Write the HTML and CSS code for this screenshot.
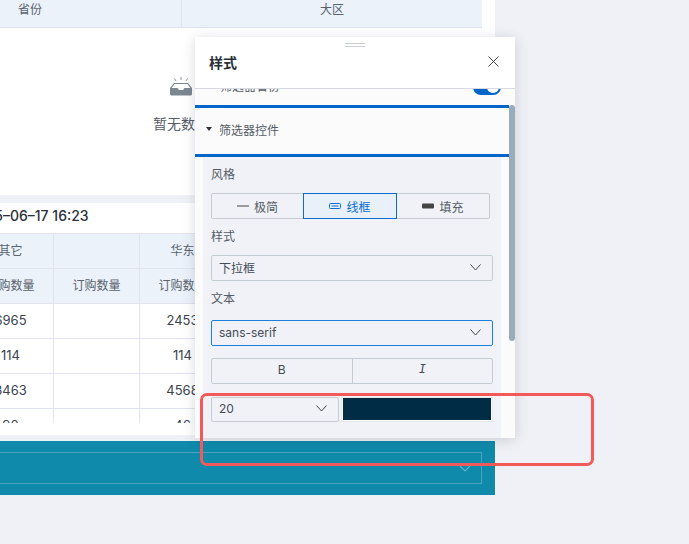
FILE: index.html
```html
<!DOCTYPE html>
<html lang="zh-CN">
<head>
  <meta charset="UTF-8">
  <meta name="viewport" content="width=device-width, initial-scale=1.0">
  <title>样式</title>
  <link rel="stylesheet" href="styles.css">
</head>
<body>
  <div class="main">
    <div class="card card-top">
      <div class="top-head">
        <div class="top-cell">省份</div>
        <div class="top-cell">大区</div>
      </div>
      <div class="empty">
        <svg class="empty-icon" width="24" height="20" viewBox="0 0 24 20">
          <path d="M12 1v3M5.5 2.5l1.5 2.5M18.500 2.500l-1.500 2.500" stroke="#8a929c" stroke-width="1" fill="none"/>
          <path d="M5 7h14l4 5v6a1.500 1.500 0 0 1-1.500 1.500h-19A1.500 1.500 0 0 1 1 18v-6z" fill="#7d8791"/>
          <path d="M5.500 8h13l2.800 4h-5.800l-1.500 2h-4l-1.500-2H2.700z" fill="#fff"/>
        </svg>
        <p>暂无数据</p>
      </div>
    </div>

    <div class="card card-table">
      <div class="update-time">2025–06–17 16:23</div>
      <div class="table-wrap">
        <table class="data-table">
          <tr class="head"><th>其它</th><th></th><th>华东</th><th></th></tr>
          <tr class="head"><th>订购数量</th><th>订购数量</th><th>订购数量</th><th>订购数量</th></tr>
          <tr><td>6965</td><td></td><td>2453</td><td></td></tr>
          <tr><td>114</td><td></td><td>114</td><td></td></tr>
          <tr><td>3463</td><td></td><td>4568</td><td></td></tr>
          <tr><td>90</td><td></td><td>46</td><td></td></tr>
        </table>
      </div>
    </div>

    <div class="teal-bar">
      <div class="teal-select">
        <svg width="12" height="7" viewBox="0 0 12 7"><path d="M1 1l5 5 5-5" stroke="#5fb0c8" stroke-width="1.200" fill="none"/></svg>
      </div>
    </div>
  </div>

  <!-- 样式面板 -->
  <div class="panel">
    <div class="drag-handle"></div>
    <div class="panel-head">
      <span class="panel-title">样式</span>
      <svg class="close" width="11" height="11" viewBox="0 0 11 11"><path d="M.5.5l10 10M10.500.5l-10 10" stroke="#444" stroke-width="1" fill="none"/></svg>
    </div>
    <div class="panel-scroll">
      <div class="clipped-row">
        <span>筛选器省份</span>
        <span class="toggle"></span>
      </div>
      <div class="section-head">
        <span class="caret"></span>筛选器控件
      </div>
      <div class="section-body">
        <div class="label">风格</div>
        <div class="segmented">
          <div class="seg">
            <svg width="12" height="8" viewBox="0 0 12 8"><rect y="3.500" width="12" height="1" fill="#444"/></svg>极简
          </div>
          <div class="seg seg-active">
            <svg width="12" height="8" viewBox="0 0 12 8"><rect x=".5" y="1.500" width="11" height="5" rx="1" fill="none" stroke="#0a6cd0"/><rect x="2.500" y="3.500" width="7" height="1" fill="#0a6cd0"/></svg>线框
          </div>
          <div class="seg">
            <svg width="12" height="8" viewBox="0 0 12 8"><rect y="1.500" width="12" height="5" rx="1" fill="#444"/></svg>填充
          </div>
        </div>
        <div class="label label-mid">样式</div>
        <div class="select">下拉框
          <svg width="11" height="7" viewBox="0 0 11 7"><path d="M.5.5l5 5.500 5-5.500" stroke="#444" stroke-width="1" fill="none"/></svg>
        </div>
        <div class="label label-mid">文本</div>
        <div class="select select-focus">sans-serif
          <svg width="11" height="7" viewBox="0 0 11 7"><path d="M.5.5l5 5.500 5-5.500" stroke="#444" stroke-width="1" fill="none"/></svg>
        </div>
        <div class="font-style">
          <div class="font-btn">B</div>
          <div class="font-btn font-italic">I</div>
        </div>
        <div class="font-row">
          <div class="select select-size">20
            <svg width="11" height="7" viewBox="0 0 11 7"><path d="M.5.5l5 5.500 5-5.500" stroke="#444" stroke-width="1" fill="none"/></svg>
          </div>
          <div class="swatch"><span></span></div>
        </div>
      </div>
      <div class="scroll-thumb"></div>
    </div>
  </div>

  <div class="annotation"></div>
</body>
</html>
```

FILE: styles.css
```css
* {
  box-sizing: border-box;
}
html, body {
  height: 100%;
}
body {
  margin: 0;
  background: #f0f1f6;
  font-family: Inter, "Noto Sans CJK SC", sans-serif;
  font-size: 12px;
  color: #3c4450;
  overflow: hidden;
  position: relative;
}
.main {
  width: 616px;
  margin-left: -121px;
  display: flex;
  flex-direction: column;
}
.card {
  background: #fff;
}
.card-top {
  height: 195px;
  margin-bottom: 8px;
}
.top-head {
  display: flex;
  width: 603px;
  height: 28px;
  background: #ebf2fa;
  border-bottom: 1px solid #dfe4ec;
}
.top-cell {
  width: 302px;
  text-align: center;
  line-height: 20px;
  color: #5a626d;
}
.top-cell + .top-cell {
  width: 301px;
  border-left: 1px solid #dfe4ec;
}
.empty {
  width: 604px;
  padding-top: 48px;
  text-align: center;
}
.empty-icon {
  display: block;
  margin: 0 auto;
}
.empty p {
  margin: 18px 0 0;
  font-size: 14px;
  line-height: 20px;
  color: #555c66;
}
.card-table {
  height: 232px;
  padding-left: 88px;
  margin-bottom: 6px;
}
.update-time {
  height: 30px;
  line-height: 26px;
  padding-left: 1px;
  font-size: 14px;
  font-weight: 500;
  color: #2c323a;
}
.table-wrap {
  height: 190px;
  overflow: hidden;
}
.data-table {
  border-collapse: collapse;
  table-layout: fixed;
  width: 344px;
}
.data-table th,
.data-table td {
  width: 86px;
  height: 35px;
  text-align: center;
  font-weight: 400;
  border: 1px solid #e1e3ee;
}
.data-table th {
  padding: 0 0 3px;
  background: #ebf2fa;
  color: #5a626d;
}
.data-table td {
  padding: 0 0 2px;
  font-size: 13px;
  color: #3c4450;
}
.teal-bar {
  height: 54px;
  padding: 11px 13px 11px 0;
  background: #0f8aab;
}
.teal-select {
  height: 32px;
  border: 1px solid #48a3bd;
  display: flex;
  align-items: center;
  justify-content: flex-end;
  padding-right: 10px;
}

/* 样式面板 */
.panel {
  position: absolute;
  left: 195px;
  top: 37px;
  width: 320px;
  height: 401px;
  background: #fbfbfb;
  box-shadow: 0 2px 12px rgba(40, 50, 70, 0.18);
  display: flex;
  flex-direction: column;
}
.drag-handle {
  position: absolute;
  left: 150px;
  top: 6px;
  width: 20px;
  height: 4px;
  border-top: 1px solid #c8ccd4;
  border-bottom: 1px solid #c8ccd4;
}
.panel-head {
  height: 52px;
  flex: none;
  background: #fff;
  border-bottom: 1px solid #d8d9e2;
  display: flex;
  align-items: center;
  justify-content: space-between;
  padding: 0 16px 2px 14px;
}
.panel-title {
  font-size: 14px;
  font-weight: 600;
  color: #2a2f36;
}
.panel-scroll {
  flex: 1;
  position: relative;
  overflow: hidden;
}
.clipped-row {
  height: 16px;
  margin-top: -10px;
  display: flex;
  justify-content: space-between;
  align-items: center;
  padding: 0 14px 0 25px;
  line-height: 16px;
  color: #555c66;
}
.toggle {
  width: 28px;
  height: 16px;
  border-radius: 8px;
  background: #0064c8;
  position: relative;
}
.toggle::after {
  content: "";
  position: absolute;
  right: 2px;
  top: 2px;
  width: 12px;
  height: 12px;
  border-radius: 50%;
  background: #fff;
}
.section-head {
  height: 52px;
  margin-top: 10px;
  width: 314px;
  border-top: 3px solid #0064c8;
  border-bottom: 3px solid #0064c8;
  display: flex;
  align-items: center;
  padding: 0 0 4px 11px;
  color: #555c66;
}
.caret {
  width: 0;
  height: 0;
  margin-right: 7px;
  border-left: 3px solid transparent;
  border-right: 3px solid transparent;
  border-top: 4px solid #333;
}
.section-body {
  margin: 0 14px 0 8px;
  height: 300px;
  background: #f0f2f7;
  padding: 9px 0 0 8px;
}
.label {
  height: 18px;
  line-height: 18px;
  margin-bottom: 9px;
  color: #555c66;
}
.label-mid {
  margin-top: 9px;
}
.segmented {
  display: flex;
  width: 279px;
  height: 26px;
  border: 1px solid #c6ccd4;
  border-radius: 2px;
}
.seg {
  flex: 1;
  display: flex;
  align-items: center;
  justify-content: center;
  gap: 5px;
  color: #555c66;
}
.seg:first-child {
  flex: none;
  width: 91px;
}
.seg-active {
  margin: -1px 0;
  flex: none;
  width: 94px;
  height: 26px;
  border: 1px solid #0a6cd0;
  background: #e8f1fa;
  color: #0a6cd0;
}
.select {
  width: 282px;
  height: 26px;
  border: 1px solid #c6ccd4;
  border-radius: 2px;
  display: flex;
  align-items: center;
  justify-content: space-between;
  padding: 0 11px 2px 7px;
  color: #444b55;
}
.select-focus {
  border-color: #1a7fe0;
  margin-top: 12px;
}
.font-style {
  display: flex;
  width: 282px;
  height: 26px;
  margin-top: 12px;
  border: 1px solid #c6ccd4;
  border-radius: 2px;
}
.font-btn {
  flex: 1;
  text-align: center;
  line-height: 22px;
  color: #444b55;
}
.font-btn + .font-btn {
  border-left: 1px solid #c6ccd4;
}
.font-italic {
  font-family: "Liberation Mono", monospace;
  font-style: italic;
}
.font-row {
  display: flex;
  gap: 2px;
  width: 282px;
  margin-top: 13px;
}
.select-size {
  width: 128px;
  height: 25px;
}
.swatch {
  flex: 1;
  height: 25px;
  padding: 0 1px 1px;
  background: #fbfbfb;
  border: 1px solid #e6e8ee;
}
.swatch span {
  display: block;
  height: 100%;
  background: #002c45;
}
.scroll-thumb {
  position: absolute;
  right: 0;
  top: 16px;
  width: 6px;
  height: 236px;
  background: #9aabba;
  border-radius: 3px;
}

/* 红框标注 */
.annotation {
  position: absolute;
  left: 200px;
  top: 393px;
  width: 394px;
  height: 73px;
  border: 3px solid #f25a5a;
  border-radius: 7px;
}
```
